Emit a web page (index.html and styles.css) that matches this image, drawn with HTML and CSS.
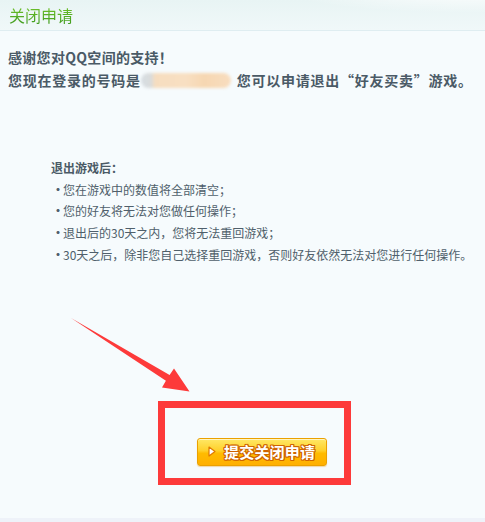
FILE: index.html
```html
<!DOCTYPE html>
<html lang="zh-CN">
<head>
<meta charset="utf-8">
<title>关闭申请</title>
<link rel="stylesheet" href="styles.css">
</head>
<body>
<div class="page">
  <header class="head">
    <h1 class="head-title">关闭申请</h1>
  </header>

  <main class="body">
    <section class="intro">
      <p class="intro-line">感谢您对QQ空间的支持！</p>
      <p class="intro-line intro-line-wide">您现在登录的号码是<span class="masked" aria-label="号码已隐藏"></span>您可以申请退出“好友买卖”游戏。</p>
    </section>

    <section class="notes">
      <h2 class="notes-title">退出游戏后：</h2>
      <ul class="notes-list">
        <li>您在游戏中的数值将全部清空；</li>
        <li>您的好友将无法对您做任何操作；</li>
        <li>退出后的30天之内，您将无法重回游戏；</li>
        <li>30天之后，除非您自己选择重回游戏，否则好友依然无法对您进行任何操作。</li>
      </ul>
    </section>

    <div class="action">
      <div class="highlight">
        <button class="submit" type="button">
          <svg class="submit-icon" width="8" height="11" viewBox="0 0 8 11">
            <polygon points="1,1 7,5.5 1,10" fill="#fff" stroke="#e07a00" stroke-width="1.2" stroke-linejoin="round"/>
          </svg>
          <span class="submit-label">提交关闭申请</span>
        </button>
      </div>
    </div>
  </main>

  <div class="foot"></div>

  <!-- red pointer drawn over the page toward the submit button -->
  <svg class="pointer" width="485" height="522" viewBox="0 0 485 522">
    <polygon points="71,318 169.6,374.9 174,368.5 189.5,391.5 162,387.5 165.9,380.8" fill="#fd3a3a"/>
  </svg>
</div>
</body>
</html>
```

FILE: styles.css
```css
html, body {
  margin: 0;
  padding: 0;
}

body {
  background: #f6fbfd;
  font-family: "Noto Sans CJK SC", "Noto Sans", sans-serif;
  color: #4a5a66;
}

.page {
  position: relative;
  width: 485px;
  height: 522px;
  overflow: hidden;
  display: flex;
  flex-direction: column;
  background: #f6fbfd;
}

/* title bar */
.head {
  height: 30px;
  border-bottom: 1px solid #dfedf1;
  background:
    radial-gradient(ellipse 260px 30px at 470px -8px, rgba(255,255,255,0.9), rgba(255,255,255,0) 70%),
    linear-gradient(#e8f4f4, #f0f8f9);
  display: flex;
  align-items: center;
  padding-left: 9px;
}

.head-title {
  margin: 0;
  font-size: 16px;
  font-weight: normal;
  line-height: 20px;
  color: #49a526;
  background: linear-gradient(#74c52c, #3e9a1e);
  -webkit-background-clip: text;
  background-clip: text;
  -webkit-text-fill-color: transparent;
}

.body {
  flex: 1;
  display: flex;
  flex-direction: column;
}

/* greeting */
.intro {
  padding: 15px 0 0 8px;
}

.intro-line {
  margin: 0;
  font-size: 14px;
  font-weight: bold;
  line-height: 23px;
  letter-spacing: 0.3px;
  color: #4a5a66;
  white-space: nowrap;
}

.intro-line-wide {
  letter-spacing: 0.75px;
}

.masked {
  display: inline-block;
  width: 90px;
  height: 15px;
  margin: 0 6px 0 0;
  vertical-align: -2px;
  border-radius: 8px;
  background: linear-gradient(90deg, #d6dde2 0, #d9dcdc 10px, #f6ddbf 14px, #f8dfc2 50%, #f6d7b2 70%, #f8ddbf 100%);
  filter: blur(1.5px);
}

/* what happens after leaving */
.notes {
  padding: 65px 0 0 51px;
  font-size: 12px;
  line-height: 21.7px;
}

.notes-title {
  margin: 0;
  font-size: 12px;
  font-weight: bold;
  line-height: 21.7px;
  color: #4a5a66;
}

.notes-list {
  margin: 0;
  padding: 0;
  list-style: none;
  color: #4f5f6b;
}

.notes-list li {
  position: relative;
  padding-left: 12px;
  white-space: nowrap;
}

.notes-list li::before {
  content: "·";
  position: absolute;
  left: 1px;
  top: 0;
  font-weight: bold;
}

/* submit area */
.action {
  padding: 135px 0 0 158px;
}

.highlight {
  width: 179px;
  height: 70px;
  border: 7px solid #fd3a3a;
  box-sizing: content-box;
  display: flex;
  align-items: flex-start;
  padding: 0;
}

.submit {
  margin: 30px 0 0 32px;
  width: 130px;
  height: 28px;
  padding: 0 0 0 10px;
  border: 1px solid #eba100;
  border-radius: 3px;
  background: linear-gradient(#ffe866 0, #ffd02a 45%, #ffbb00 55%, #ffb000 100%);
  box-shadow: inset 0 1px 0 rgba(255,255,255,0.6), 0 1px 1px rgba(230,150,0,0.35);
  display: flex;
  align-items: center;
  gap: 8px;
  cursor: pointer;
  font-family: inherit;
}

.submit-icon {
  flex: none;
  display: block;
}

.submit-label {
  font-size: 15px;
  font-weight: bold;
  line-height: 18px;
  color: #fff;
  letter-spacing: 0.2px;
  text-shadow:
    1px 0 0 #cf6400, -1px 0 0 #cf6400,
    0 1px 0 #cf6400, 0 -1px 0 #cf6400,
    1px 1px 0 #cf6400, -1px -1px 0 #cf6400,
    1px -1px 0 #cf6400, -1px 1px 0 #cf6400;
}

.foot {
  height: 4px;
  background: #eef2f9;
}

.pointer {
  position: absolute;
  left: 0;
  top: 0;
  pointer-events: none;
}
```
